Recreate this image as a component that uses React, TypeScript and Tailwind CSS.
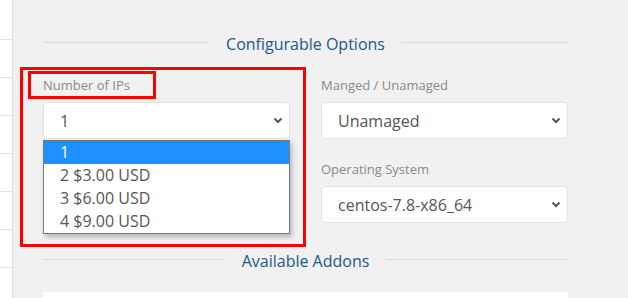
import { ReactNode } from "react";

const ipOptions = ["1", "2 $3.00 USD", "3 $6.00 USD", "4 $9.00 USD"];

function Chevron() {
  return (
    <svg width="10" height="7" viewBox="0 0 10 7" className="shrink-0">
      <path d="M1.5 1.5 L5 5 L8.5 1.5" fill="none" stroke="#555" strokeWidth="2" />
    </svg>
  );
}

function Heading({ children }: { children: ReactNode }) {
  return (
    <div className="flex items-start">
      <div className="mt-[10px] h-px flex-1 bg-[#dadada]" />
      <div className="px-[17px] text-[16px] leading-[24px] text-[#22588a]">{children}</div>
      <div className="mt-[10px] h-px flex-1 bg-[#dadada]" />
    </div>
  );
}

function FakeSelect({ value }: { value: string }) {
  return (
    <div className="flex h-[37px] items-center justify-between rounded-[4px] border border-[#e3e3e3] bg-white pl-[16px] pr-[6px] text-[16px] text-[#555]">
      <span>{value}</span>
      <Chevron />
    </div>
  );
}

function Field({ label, value, children }: { label: string; value: string; children?: ReactNode }) {
  return (
    <div className="relative">
      <div className="h-[18px] text-[13px] leading-[18px] text-[#8a8a8a]">{label}</div>
      <div className="mt-[8px]">
        <FakeSelect value={value} />
      </div>
      {children}
    </div>
  );
}

export default function App() {
  return (
    <div className="relative flex h-[298px] w-[628px] overflow-hidden bg-[#f1f1f1] font-['Open_Sans',sans-serif]">
      {/* left table strip */}
      <div className="flex w-[13px] shrink-0 flex-col border-r border-[#dedede] bg-white">
        <div className="h-[40px] shrink-0 border-b border-[#e2e2e2]" />
        {[0, 1, 2, 3, 4, 5, 6].map((i) => (
          <div key={i} className="h-[38px] shrink-0 border-b border-[#e2e2e2]" />
        ))}
      </div>

      <div className="w-[584px] shrink-0 pl-[30px] pr-[29px] pt-[32px]">
        <Heading>Configurable Options</Heading>

        <div className="mt-[20px] grid grid-cols-2 gap-x-[31px]">
          <Field label="Number of IPs" value="1">
            <div className="absolute left-0 right-0 top-[64px] z-10 border border-[#7a7a7a] bg-white shadow-[2px_3px_5px_rgba(0,0,0,0.25)]">
              {ipOptions.map((o, i) => (
                <div
                  key={o}
                  className={`h-[23px] pl-[16px] text-[16px] leading-[23px] ${
                    i === 0 ? "bg-[#1e90ff] text-white" : "text-[#555]"
                  }`}
                >
                  {o}
                </div>
              ))}
            </div>
          </Field>
          <div className="flex flex-col gap-[21px]">
            <Field label="Manged / Unamaged" value="Unamaged" />
            <Field label="Operating System" value="centos-7.8-x86_64" />
          </div>
        </div>

        <div className="mt-[26px]">
          <Heading>Available Addons</Heading>
        </div>

        <div className="mt-[19px] h-[40px] bg-white" />
      </div>

      <div className="w-0 shrink-0 border-l border-dotted border-[#e9e9e9]" />

      {/* annotation boxes */}
      <div className="absolute left-[20px] top-[67px] h-[180px] w-[286px] border-[3px] border-[#ff0000]" />
      <div className="absolute left-[28px] top-[71px] h-[28px] w-[128px] border-[3px] border-[#ff0000]" />
    </div>
  );
}
